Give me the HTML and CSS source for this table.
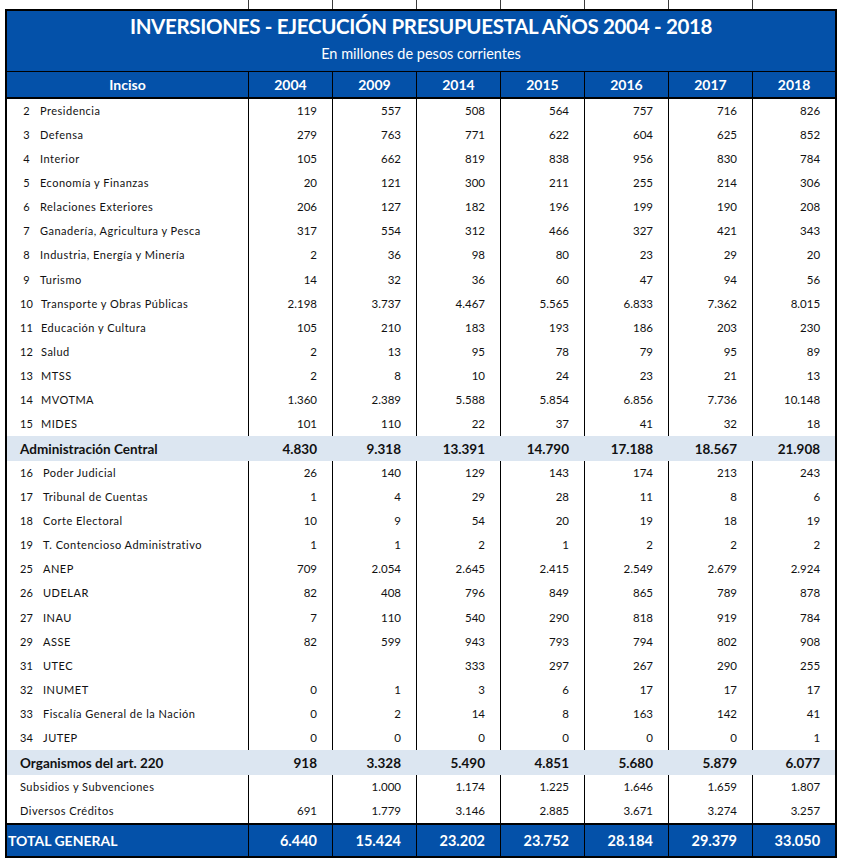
FILE: index.html
```html
<!DOCTYPE html>
<html lang="es">
<head>
<meta charset="utf-8">
<title>Inversiones - Ejecución presupuestal años 2004 - 2018</title>
<link rel="stylesheet" href="styles.css">
</head>
<body>
<div class="ticks"><span></span><span></span><span></span><span></span><span></span><span></span><span></span></div>
<table class="grid">
  <colgroup>
    <col class="c-inc"><col class="c-y"><col class="c-y"><col class="c-y"><col class="c-y"><col class="c-y"><col class="c-y"><col class="c-last">
  </colgroup>
  <thead>
    <tr class="title-row">
      <td colspan="8">
        <div class="title">INVERSIONES - EJECUCIÓN PRESUPUESTAL AÑOS 2004 - 2018</div>
        <div class="subtitle">En millones de pesos corrientes</div>
      </td>
    </tr>
    <tr class="head">
      <th>Inciso</th><th>2004</th><th>2009</th><th>2014</th><th>2015</th><th>2016</th><th>2017</th><th>2018</th>
    </tr>
  </thead>
  <tbody>
    <tr><td class="name"><span class="n">2</span><span class="t">Presidencia</span></td><td>119</td><td>557</td><td>508</td><td>564</td><td>757</td><td>716</td><td>826</td></tr>
    <tr><td class="name"><span class="n">3</span><span class="t">Defensa</span></td><td>279</td><td>763</td><td>771</td><td>622</td><td>604</td><td>625</td><td>852</td></tr>
    <tr><td class="name"><span class="n">4</span><span class="t">Interior</span></td><td>105</td><td>662</td><td>819</td><td>838</td><td>956</td><td>830</td><td>784</td></tr>
    <tr><td class="name"><span class="n">5</span><span class="t">Economía y Finanzas</span></td><td>20</td><td>121</td><td>300</td><td>211</td><td>255</td><td>214</td><td>306</td></tr>
    <tr><td class="name"><span class="n">6</span><span class="t">Relaciones Exteriores</span></td><td>206</td><td>127</td><td>182</td><td>196</td><td>199</td><td>190</td><td>208</td></tr>
    <tr><td class="name"><span class="n">7</span><span class="t">Ganadería, Agricultura y Pesca</span></td><td>317</td><td>554</td><td>312</td><td>466</td><td>327</td><td>421</td><td>343</td></tr>
    <tr><td class="name"><span class="n">8</span><span class="t">Industria, Energía y Minería</span></td><td>2</td><td>36</td><td>98</td><td>80</td><td>23</td><td>29</td><td>20</td></tr>
    <tr><td class="name"><span class="n">9</span><span class="t">Turismo</span></td><td>14</td><td>32</td><td>36</td><td>60</td><td>47</td><td>94</td><td>56</td></tr>
    <tr><td class="name"><span class="n">10</span><span class="t t-w">Transporte y Obras Públicas</span></td><td>2.198</td><td>3.737</td><td>4.467</td><td>5.565</td><td>6.833</td><td>7.362</td><td>8.015</td></tr>
    <tr><td class="name"><span class="n">11</span><span class="t t-w">Educación y Cultura</span></td><td>105</td><td>210</td><td>183</td><td>193</td><td>186</td><td>203</td><td>230</td></tr>
    <tr><td class="name"><span class="n">12</span><span class="t t-w">Salud</span></td><td>2</td><td>13</td><td>95</td><td>78</td><td>79</td><td>95</td><td>89</td></tr>
    <tr><td class="name"><span class="n">13</span><span class="t t-w">MTSS</span></td><td>2</td><td>8</td><td>10</td><td>24</td><td>23</td><td>21</td><td>13</td></tr>
    <tr><td class="name"><span class="n">14</span><span class="t t-w">MVOTMA</span></td><td>1.360</td><td>2.389</td><td>5.588</td><td>5.854</td><td>6.856</td><td>7.736</td><td>10.148</td></tr>
    <tr><td class="name"><span class="n">15</span><span class="t t-w">MIDES</span></td><td>101</td><td>110</td><td>22</td><td>37</td><td>41</td><td>32</td><td>18</td></tr>
    <tr class="band"><td class="name">Administración Central</td><td>4.830</td><td>9.318</td><td>13.391</td><td>14.790</td><td>17.188</td><td>18.567</td><td>21.908</td></tr>
    <tr><td class="name"><span class="n">16</span><span class="t t-x">Poder Judicial</span></td><td>26</td><td>140</td><td>129</td><td>143</td><td>174</td><td>213</td><td>243</td></tr>
    <tr><td class="name"><span class="n">17</span><span class="t t-x">Tribunal de Cuentas</span></td><td>1</td><td>4</td><td>29</td><td>28</td><td>11</td><td>8</td><td>6</td></tr>
    <tr><td class="name"><span class="n">18</span><span class="t t-x">Corte Electoral</span></td><td>10</td><td>9</td><td>54</td><td>20</td><td>19</td><td>18</td><td>19</td></tr>
    <tr><td class="name"><span class="n">19</span><span class="t t-x">T. Contencioso Administrativo</span></td><td>1</td><td>1</td><td>2</td><td>1</td><td>2</td><td>2</td><td>2</td></tr>
    <tr><td class="name"><span class="n">25</span><span class="t t-x">ANEP</span></td><td>709</td><td>2.054</td><td>2.645</td><td>2.415</td><td>2.549</td><td>2.679</td><td>2.924</td></tr>
    <tr><td class="name"><span class="n">26</span><span class="t t-x">UDELAR</span></td><td>82</td><td>408</td><td>796</td><td>849</td><td>865</td><td>789</td><td>878</td></tr>
    <tr><td class="name"><span class="n">27</span><span class="t t-x">INAU</span></td><td>7</td><td>110</td><td>540</td><td>290</td><td>818</td><td>919</td><td>784</td></tr>
    <tr><td class="name"><span class="n">29</span><span class="t t-x">ASSE</span></td><td>82</td><td>599</td><td>943</td><td>793</td><td>794</td><td>802</td><td>908</td></tr>
    <tr><td class="name"><span class="n">31</span><span class="t t-x">UTEC</span></td><td></td><td></td><td>333</td><td>297</td><td>267</td><td>290</td><td>255</td></tr>
    <tr><td class="name"><span class="n">32</span><span class="t t-x">INUMET</span></td><td>0</td><td>1</td><td>3</td><td>6</td><td>17</td><td>17</td><td>17</td></tr>
    <tr><td class="name"><span class="n">33</span><span class="t t-x">Fiscalía General de la Nación</span></td><td>0</td><td>2</td><td>14</td><td>8</td><td>163</td><td>142</td><td>41</td></tr>
    <tr><td class="name"><span class="n">34</span><span class="t t-x">JUTEP</span></td><td>0</td><td>0</td><td>0</td><td>0</td><td>0</td><td>0</td><td>1</td></tr>
    <tr class="band"><td class="name">Organismos del art. 220</td><td>918</td><td>3.328</td><td>5.490</td><td>4.851</td><td>5.680</td><td>5.879</td><td>6.077</td></tr>
    <tr><td class="name plain">Subsidios y Subvenciones</td><td></td><td>1.000</td><td>1.174</td><td>1.225</td><td>1.646</td><td>1.659</td><td>1.807</td></tr>
    <tr><td class="name plain">Diversos Créditos</td><td>691</td><td>1.779</td><td>3.146</td><td>2.885</td><td>3.671</td><td>3.274</td><td>3.257</td></tr>
  </tbody>
  <tfoot>
    <tr class="total"><td class="name">TOTAL GENERAL</td><td>6.440</td><td>15.424</td><td>23.202</td><td>23.752</td><td>28.184</td><td>29.379</td><td>33.050</td></tr>
  </tfoot>
</table>
</body>
</html>
```

FILE: styles.css
```css
html, body {
  margin: 0;
  padding: 0;
  background: #ffffff;
}

body {
  font-family: Lato, "Liberation Sans", sans-serif;
  color: #111111;
}

.ticks {
  display: flex;
  margin-left: 5px;
  height: 9px;
}

.ticks span {
  box-sizing: border-box;
  width: 84px;
  height: 9px;
  border-right: 1px solid #3a3a3a;
}

.ticks span:first-child {
  width: 244px;
}

.grid {
  margin-left: 5px;
  width: 832px;
  table-layout: fixed;
  border-collapse: separate;
  border-spacing: 0;
  border: 2px solid #000;
}

.c-inc { width: 241px; }
.c-y { width: 84px; }
.c-last { width: 83px; }

.title-row td {
  padding: 0;
  background: #0451a9;
  color: #fff;
  text-align: center;
  border-bottom: 1px solid #000;
}

.title {
  height: 30px;
  line-height: 31px;
  font-size: 20.5px;
  font-weight: 700;
  letter-spacing: -0.32px;
}

.subtitle {
  margin-top: 4px;
  padding-bottom: 9px;
  line-height: 17px;
  font-size: 14.5px;
}

.head th {
  height: 25px;
  padding: 0;
  background: #0451a9;
  color: #fff;
  font-size: 14px;
  font-weight: 700;
  text-align: center;
  border-bottom: 2px solid #000;
}

.head th + th {
  border-left: 1px solid #000;
}

tbody tr {
  height: 24px;
}

tbody tr:nth-child(14n+8) {
  height: 25px;
}

tbody td {
  padding: 0 15px 0 0;
  font-size: 11.5px;
  line-height: 14px;
  text-align: right;
  white-space: nowrap;
}

tbody td + td {
  border-left: 1px solid #000;
}

tbody td.name {
  padding: 0;
  text-align: left;
  font-size: 11px;
  letter-spacing: 0.5px;
}

.n {
  display: inline-block;
  width: 15px;
  margin-left: 12px;
  text-align: center;
  letter-spacing: 0;
}

.t { margin-left: 6px; }
.t-w { margin-left: 7px; }
.t-x { margin-left: 9px; }

tbody td.plain {
  padding-left: 13px;
}

tbody tr.band {
  height: 25px;
  background: #dce6f1;
}

tbody tr.band td {
  font-size: 13.5px;
  font-weight: 700;
  border-left: none;
}

tbody tr.band td.name {
  padding-left: 13px;
  font-size: 13.5px;
  letter-spacing: 0;
}

.total td {
  height: 31px;
  padding: 0 15px 0 0;
  background: #0451a9;
  color: #fff;
  font-size: 14.5px;
  font-weight: 700;
  text-align: right;
  border-top: 2px solid #000;
}

.total td + td {
  border-left: 1px solid #000;
}

.total td.name {
  padding: 0 0 0 1px;
  text-align: left;
  font-size: 14px;
}
```
